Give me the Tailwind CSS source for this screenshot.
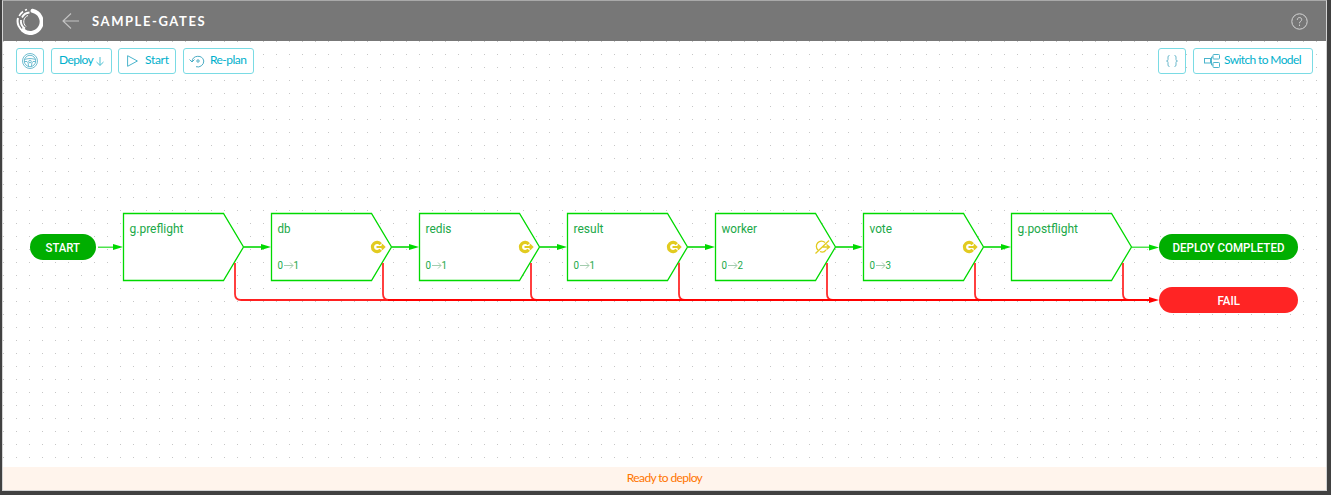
<!DOCTYPE html>
<html lang="en">
<head>
<meta charset="utf-8">
<title>sample-gates</title>
<script src="https://cdn.jsdelivr.net/npm/@tailwindcss/browser@4"></script>
</head>
<body class="h-[495px] w-[1331px] overflow-hidden bg-[#414141] font-['Lato',sans-serif]">
<div class="ml-[2px] flex h-[491px] w-[1325px] flex-col border border-t-[#a9a9a9] border-r-[#d4d4d4] border-b-[#d4d4d4] border-l-[#d4d4d4] bg-white">
  <header class="flex h-10 shrink-0 items-center bg-[#777777] pr-[18px] pl-[13px] text-white">
    <svg class="size-[27px]" viewBox="0 0 27 27" fill="none" stroke="currentColor">
      <path d="M16.500 2.800A11.200 11.200 0 1 1 7 22.200" stroke-width="4" stroke-linecap="round"/>
      <path d="M8 23.500A11.600 11.600 0 0 1 2 10" stroke-width="2"/>
      <path d="M3.200 8A12 12 0 0 1 7 3.500M9 2.200L11 1.500" stroke-width="1.600"/>
      <path d="M9 20.500A8.600 8.600 0 0 1 5 12M6 9.500A9 9 0 0 1 13.500 4.500" stroke-width="1.800"/>
      <path d="M10 18.500A6.500 6.500 0 0 1 12 7.500" stroke-width="1"/>
    </svg>
    <svg class="ml-[19px] h-4 w-[17px] text-[#c4c4c4]" viewBox="0 0 17 16" fill="none" stroke="currentColor" stroke-width="1.100"><path d="M17 8H1M9 0.500L1 8l8 7.500"/></svg>
    <h1 class="ml-[13px] text-[13px] leading-5 font-bold tracking-[1.58px]">SAMPLE-GATES</h1>
    <svg class="ml-auto size-[17px] text-[#d5d5d5]" viewBox="0 0 17 17" fill="none" stroke="currentColor"><circle cx="8.500" cy="8.500" r="7.700"/><path d="M6.300 6.800C6.300 3.800 10.700 3.900 10.700 6.600C10.700 8.300 8.500 8.200 8.500 10.300M8.500 11.600v1.300"/></svg>
  </header>

  <main class="relative min-h-0 flex-1">
    <svg class="absolute inset-0 size-full" viewBox="3 41 1323 426" fill="none">
      <defs>
        <pattern id="dots" width="13" height="13" patternUnits="userSpaceOnUse" x="3" y="2"><rect width="1" height="1" fill="#c6c6c6"/></pattern>
        <path id="step" d="M0.500 0.500H100.500L120.500 34L100.500 67.500H0.500Z" fill="#fff" stroke="#00d900" stroke-width="1.300"/>
        <path id="flow" d="M121 34H138" stroke="#22dc22" stroke-width="1.800"/>
        <path id="tip" d="M0 0L-10 -3V3Z"/>
        <path id="drop" d="M112 50V81Q112 87 118 87" stroke="#ff2c2c" stroke-width="1.800"/>
        <g id="restart">
          <path d="M258.700 31.200A4.600 4.600 0 1 0 258.700 36.800" stroke="#e2cb20" stroke-width="3.200"/>
          <path d="M254.500 34H262.500M259.800 31.500L262.400 34L259.800 36.500" stroke="#e2cb20" stroke-width="1.800"/>
        </g>
      </defs>
      <rect x="3" y="41" width="1323" height="426" fill="url(#dots)"/>
      <g>
        <use href="#step" x="123" y="213"/><use href="#step" x="271" y="213"/><use href="#step" x="419" y="213"/><use href="#step" x="567" y="213"/><use href="#step" x="715" y="213"/><use href="#step" x="863" y="213"/><use href="#step" x="1011" y="213"/>
      </g>
      <path d="M98 247.200H114" stroke="#22dc22" stroke-width="1.200"/>
      <path d="M1132 247.200H1150" stroke="#22dc22" stroke-width="1.200"/>
      <g>
        <use href="#flow" x="123" y="213"/><use href="#flow" x="271" y="213"/><use href="#flow" x="419" y="213"/><use href="#flow" x="567" y="213"/><use href="#flow" x="715" y="213"/><use href="#flow" x="863" y="213"/>
      </g>
      <g fill="#00d900">
        <use href="#tip" x="123" y="247"/><use href="#tip" x="271" y="247"/><use href="#tip" x="419" y="247"/><use href="#tip" x="567" y="247"/><use href="#tip" x="715" y="247"/><use href="#tip" x="863" y="247"/><use href="#tip" x="1011" y="247"/><use href="#tip" x="1159" y="247.500"/>
      </g>
      <g>
        <use href="#drop" x="123" y="213"/><use href="#drop" x="271" y="213"/><use href="#drop" x="419" y="213"/><use href="#drop" x="567" y="213"/><use href="#drop" x="715" y="213"/><use href="#drop" x="863" y="213"/><use href="#drop" x="1011" y="213"/>
      </g>
      <path d="M241 300H388" stroke="#ff2020" stroke-width="1.800"/>
      <path d="M388 300H1150" stroke="#ff0000" stroke-width="2"/>
      <use href="#tip" x="1159" y="300" fill="#ff0000"/>
      <g>
        <use href="#restart" x="122" y="213"/><use href="#restart" x="270" y="213"/><use href="#restart" x="418" y="213"/><use href="#restart" x="714" y="213"/>
      </g>
      <path d="M815.500 253.500L829 240.500M818 250A4.800 4.800 0 0 1 825 242.500M820 251.500A4.800 4.800 0 0 0 826 249.800M822 247H829M826.500 244.500L829.500 247L826.500 249.500" stroke="#e2cb20" stroke-width="1.300"/>
      <rect x="30" y="234" width="66" height="26" rx="13" fill="#00ae00"/>
      <rect x="1159" y="234" width="139" height="26" rx="13" fill="#00ae00"/>
      <rect x="1159" y="287" width="139" height="26" rx="13" fill="#ff2424"/>
      <g class="font-['Roboto',sans-serif] text-[13px] font-medium" fill="#fff">
        <text x="45.500" y="252" textLength="34.500" lengthAdjust="spacingAndGlyphs">START</text>
        <text x="1172.500" y="252" textLength="112" lengthAdjust="spacingAndGlyphs">DEPLOY COMPLETED</text>
        <text x="1217.500" y="305" textLength="22.500" lengthAdjust="spacingAndGlyphs">FAIL</text>
      </g>
      <g class="font-['Roboto',sans-serif] text-[13.500px]" fill="#20a848">
        <text x="129.500" y="233" textLength="54" lengthAdjust="spacingAndGlyphs">g.preflight</text>
        <text x="277.500" y="233" textLength="13" lengthAdjust="spacingAndGlyphs">db</text>
        <text x="425.500" y="233" textLength="26" lengthAdjust="spacingAndGlyphs">redis</text>
        <text x="573.500" y="233" textLength="30" lengthAdjust="spacingAndGlyphs">result</text>
        <text x="721.500" y="233" textLength="35.500" lengthAdjust="spacingAndGlyphs">worker</text>
        <text x="869.500" y="233" textLength="22.500" lengthAdjust="spacingAndGlyphs">vote</text>
        <text x="1017.500" y="233" textLength="60.500" lengthAdjust="spacingAndGlyphs">g.postflight</text>
      </g>
      <g class="font-['Roboto',sans-serif] text-[11.500px]" fill="#20a848">
        <text x="277.500" y="269" textLength="5.500" lengthAdjust="spacingAndGlyphs">0</text><text x="293.500" y="269" textLength="5.500" lengthAdjust="spacingAndGlyphs">1</text>
        <text x="425.500" y="269" textLength="5.500" lengthAdjust="spacingAndGlyphs">0</text><text x="441.500" y="269" textLength="5.500" lengthAdjust="spacingAndGlyphs">1</text>
        <text x="573.500" y="269" textLength="5.500" lengthAdjust="spacingAndGlyphs">0</text><text x="589.500" y="269" textLength="5.500" lengthAdjust="spacingAndGlyphs">1</text>
        <text x="721.500" y="269" textLength="5.500" lengthAdjust="spacingAndGlyphs">0</text><text x="737.500" y="269" textLength="5.500" lengthAdjust="spacingAndGlyphs">2</text>
        <text x="869.500" y="269" textLength="5.500" lengthAdjust="spacingAndGlyphs">0</text><text x="885.500" y="269" textLength="5.500" lengthAdjust="spacingAndGlyphs">3</text>
      </g>
      <g stroke="#a3cdae">
        <path id="arrow" d="M284 265.500H293M290 262.500L293 265.500L290 268.500"/>
        <use href="#arrow" x="148"/><use href="#arrow" x="296"/><use href="#arrow" x="444"/><use href="#arrow" x="592"/>
      </g>
    </svg>

    <nav class="relative flex items-center px-[13px] pt-[7px] text-[12px] leading-4 tracking-[-0.62px] text-[#00b0cc]">
      <button class="flex h-[26px] w-7 items-center justify-center rounded-[3px] border border-[#7adbe4] bg-white">
        <svg class="size-4" viewBox="0 0 16 16" fill="none" stroke="#4aacc4" stroke-width=".8"><circle cx="8" cy="8" r="7.500"/><circle cx="8" cy="8" r="5.700"/><circle cx="8" cy="8.500" r="1.300"/><path d="M2.800 6.300Q8 4.500 13.200 6.300M2.500 8.500H5Q6.500 9 6.500 13.200M13.500 8.500H11Q9.500 9 9.500 13.200"/></svg>
      </button>
      <button class="ml-[7px] flex h-[26px] w-[61px] items-center rounded-[3px] border border-[#7adbe4] bg-white pb-[2px] pl-[7px]">
        <span class="w-[34px] whitespace-nowrap">Deploy</span>
        <svg class="mt-[2px] ml-[3px] h-[9px] w-2" viewBox="0 0 8 9" fill="none" stroke="#4cc0d2"><path d="M4 0V8.300M0.500 5L4 8.400L7.500 5"/></svg>
      </button>
      <button class="ml-[6px] flex h-[26px] w-[58px] items-center rounded-[3px] border border-[#7adbe4] bg-white pb-[2px] pl-2">
        <svg class="mt-[2px] h-3 w-[11px]" viewBox="0 0 11 12" fill="none" stroke="#4ab4cc"><path d="M.6.7V11.300L10.400 6Z"/></svg>
        <span class="ml-[7px] tracking-[-0.3px]">Start</span>
      </button>
      <button class="ml-[7px] flex h-[26px] w-[71px] items-center rounded-[3px] border border-[#7adbe4] bg-white pb-[2px] pl-[5px]">
        <svg class="mt-[2px] h-[14px] w-4" viewBox="0 0 16 14" fill="none" stroke="#4aacc4"><path d="M3 7.500A6 6 0 0 1 14.800 7A6 6 0 0 1 7 12.700M0.500 5.500L3 8L5.500 5.500"/><circle cx="9" cy="7" r="1.200"/></svg>
        <span class="ml-[5px] tracking-[-0.55px]">Re-plan</span>
      </button>
      <button class="ml-auto flex h-[26px] w-7 items-center justify-center rounded-[3px] border border-[#7adbe4] bg-white">
        <svg class="h-3 w-3" viewBox="0 0 12 12" fill="none" stroke="#6db9cc"><path d="M3.500.5Q2 .5 2 2V4.500Q2 6 .5 6Q2 6 2 7.500V10Q2 11.500 3.500 11.500M8.500.5Q10 .5 10 2V4.500Q10 6 11.500 6Q10 6 10 7.500V10Q10 11.500 8.500 11.500"/></svg>
      </button>
      <button class="ml-[7px] flex h-[26px] w-[120px] items-center rounded-[3px] border border-[#7adbe4] bg-white pb-[2px] pl-[10px]">
        <svg class="mt-[2px] h-[14px] w-4" viewBox="0 0 16 14" fill="none" stroke="#4ab4cc"><rect x=".5" y="4.500" width="6" height="4.500"/><rect x="9" y=".5" width="6.500" height="4.500" rx=".8"/><rect x="9" y="8.500" width="6.500" height="5" rx=".8"/><path d="M6.500 6.800H7.500V3H9M7.500 6.800V11H9"/></svg>
        <span class="ml-[4px] whitespace-nowrap">Switch to Model</span>
      </button>
    </nav>
  </main>

  <footer class="flex h-[23px] shrink-0 items-center justify-center bg-[#fff4ec] pb-px text-[12px] leading-4 tracking-[-0.62px] text-[#ff7500]">Ready to deploy</footer>
</div>
</body>
</html>
